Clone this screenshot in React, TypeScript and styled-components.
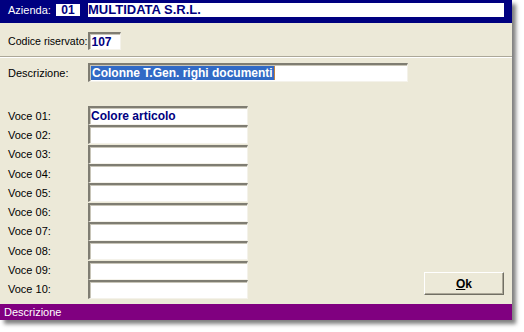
import React from "react";
import styled, { createGlobalStyle } from "styled-components";

const Global = createGlobalStyle`
  html, body { margin: 0; padding: 0; background: #ffffff; }
  body { font-family: "Liberation Sans", Arial, sans-serif; font-size: 11px; }
  * { box-sizing: border-box; }
`;

const Stage = styled.div`
  width: 524px;
  height: 332px;
  background: #ffffff;
  overflow: hidden;
`;

const Window = styled.div`
  width: 512px;
  height: 320px;
  background: #ece9d8;
  display: flex;
  flex-direction: column;
  box-shadow: 4px 4px 4px rgba(0, 0, 0, 0.5);
  color: #000000;
`;

const Header = styled.div`
  height: 23px;
  background: #000080;
  display: flex;
  align-items: center;
  padding: 0 8px 3px 8px;
  color: #ffffff;
`;

const HeaderLabel = styled.span`
  width: 48px;
  font-size: 11px;
`;

const CodeBox = styled.div`
  width: 24px;
  height: 12px;
  background: #ffffff;
  color: #000080;
  font-weight: bold;
  font-size: 12px;
  display: flex;
  align-items: center;
  justify-content: center;
  line-height: 12px;
`;

const NameBox = styled.div`
  flex: 1;
  height: 14px;
  margin-left: 8px;
  background: #ffffff;
  color: #000080;
  font-weight: bold;
  font-size: 13px;
  line-height: 14px;
  padding-left: 0;
`;

const CodeRow = styled.div`
  height: 33px;
  display: flex;
  align-items: center;
  padding: 9px 0 6px 8px;
`;

const Label = styled.span<{ $w?: number; $tight?: boolean }>`
  width: ${(p) => (p.$w ? `${p.$w}px` : "auto")};
  flex-shrink: 0;
  font-size: ${(p) => (p.$tight ? "10.6px" : "11px")};
  margin-right: ${(p) => (p.$w ? "0" : "1px")};
  white-space: nowrap;
`;

const Field = styled.div<{ $w: number; $h?: number }>`
  width: ${(p) => p.$w}px;
  height: ${(p) => p.$h ?? 18}px;
  background: #ffffff;
  border-top: 2px solid #7f7d72;
  border-left: 2px solid #7f7d72;
  border-right: 1px solid #f4f2ea;
  border-bottom: 1px solid #f4f2ea;
  box-shadow: inset 1px 1px 0 #c8c5b8;
  color: #000080;
  font-weight: bold;
  font-size: 12px;
  line-height: 14px;
  padding-left: 1px;
  display: flex;
  align-items: center;
  white-space: nowrap;
  overflow: hidden;
`;

const Separator = styled.div`
  height: 2px;
  border-top: 1px solid #aca899;
  border-bottom: 1px solid #ffffff;
`;

const DescRow = styled.div`
  display: flex;
  align-items: center;
  padding: 5px 0 0 8px;
  height: 24px;
`;

const Selected = styled.span`
  background: #316ac5;
  color: #ffffff;
  padding: 0 1px;
`;

const Caret = styled.span`
  width: 1px;
  height: 14px;
  background: #c08040;
`;

const Body = styled.div`
  flex: 1;
  display: flex;
  align-items: flex-end;
  justify-content: space-between;
  padding: 24px 8px 5px 8px;
`;

const VoceList = styled.div`
  display: flex;
  flex-direction: column;
`;

const VoceRow = styled.div`
  height: 19.3px;
  display: flex;
  align-items: center;
`;

const OkButton = styled.button`
  width: 80px;
  height: 23px;
  margin-bottom: 4px;
  background: #ece9d8;
  border-top: 1px solid #ffffff;
  border-left: 1px solid #ffffff;
  border-right: 1px solid #716f64;
  border-bottom: 1px solid #716f64;
  box-shadow: inset -1px -1px 0 #aca899;
  font-family: "Liberation Sans", Arial, sans-serif;
  font-weight: bold;
  font-size: 12px;
  color: #000000;
  padding: 0;
  cursor: default;
  u { text-decoration: underline; }
`;

const StatusBar = styled.div`
  height: 16px;
  background: #800080;
  color: #ffffff;
  font-size: 11px;
  line-height: 16px;
  padding-left: 4px;
`;

const voci = [
  "Colore articolo", "", "", "", "", "", "", "", "", "",
];

export default function App() {
  return (
    <Stage>
      <Global />
      <Window>
        <Header>
          <HeaderLabel>Azienda:</HeaderLabel>
          <CodeBox>01</CodeBox>
          <NameBox>MULTIDATA S.R.L.</NameBox>
        </Header>
        <CodeRow>
          <Label $tight>Codice riservato:</Label>
          <Field $w={33}>107</Field>
        </CodeRow>
        <Separator />
        <DescRow>
          <Label $w={80}>Descrizione:</Label>
          <Field $w={320} $h={19}>
            <Selected>Colonne T.Gen. righi documenti</Selected>
            <Caret />
          </Field>
        </DescRow>
        <Body>
          <VoceList>
            {voci.map((v, i) => (
              <VoceRow key={i}>
                <Label $w={80}>Voce {String(i + 1).padStart(2, "0")}:</Label>
                <Field $w={160} $h={19}>{v}</Field>
              </VoceRow>
            ))}
          </VoceList>
          <OkButton>
            <u>O</u>k
          </OkButton>
        </Body>
        <StatusBar>Descrizione</StatusBar>
      </Window>
    </Stage>
  );
}
